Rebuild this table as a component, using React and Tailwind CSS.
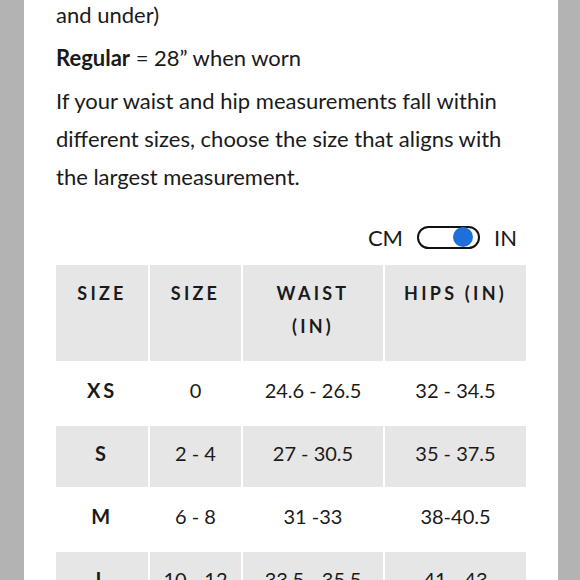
import React from "react";

const rows = [
  ["XS", "0", "24.6 - 26.5", "32 - 34.5"],
  ["S", "2 - 4", "27 - 30.5", "35 - 37.5"],
  ["M", "6 - 8", "31 -33", "38-40.5"],
  ["L", "10 - 12", "33.5 - 35.5", "41 - 43"],
];

export default function App() {
  return (
    <div className="w-[580px] h-[580px] overflow-hidden bg-[#b3b3b3] flex" style={{ fontFamily: "Lato, 'Noto Sans', sans-serif" }}>
      <div className="ml-[24px] w-[534px] h-full bg-white px-[32px] text-[#1a1a1a]">
        <div className="mt-[-4px] text-[22px] leading-[38px] max-w-[450px]">
          <p className="mb-[5px]">and under)</p>
          <p className="mb-[5px]">
            <span className="font-bold">Regular</span> = 28” when worn
          </p>
          <p>
            If your waist and hip measurements fall within different sizes, choose the size that aligns with the largest measurement.
          </p>
        </div>

        <div className="mt-[26px] flex items-center justify-end gap-[14px] pr-[9px] h-[30px] text-[22px]">
          <span>CM</span>
          <div className="w-[63px] h-[23px] rounded-full border-2 border-[#111] flex items-center justify-end pr-[5px]">
            <div className="w-[20px] h-[20px] rounded-full bg-[#1e6fd9]" />
          </div>
          <span>IN</span>
        </div>

        <div className="mt-[13px] grid grid-cols-[92px_91px_140px_141px] gap-[2px] w-[470px]">
          {["SIZE", "SIZE", "WAIST (IN)", "HIPS (IN)"].map((h, i) => (
            <div
              key={i}
              className="bg-[#e6e6e6] h-[96px] pt-[12px] px-[4px] text-center font-bold text-[18px] leading-[33px] tracking-[0.18em]"
            >
              {h === "WAIST (IN)" ? (
                <>
                  WAIST
                  <br />
                  (IN)
                </>
              ) : (
                h
              )}
            </div>
          ))}
          {rows.map((r, ri) =>
            r.map((c, ci) => (
              <div
                key={ri + "-" + ci}
                className={`h-[61px] pb-[8px] flex items-center justify-center text-[20px] ${
                  ri % 2 === 1 ? "bg-[#e6e6e6]" : "bg-white"
                } ${ci === 0 ? "font-bold tracking-[0.14em]" : ""}`}
              >
                {c}
              </div>
            ))
          )}
        </div>
      </div>
    </div>
  );
}
